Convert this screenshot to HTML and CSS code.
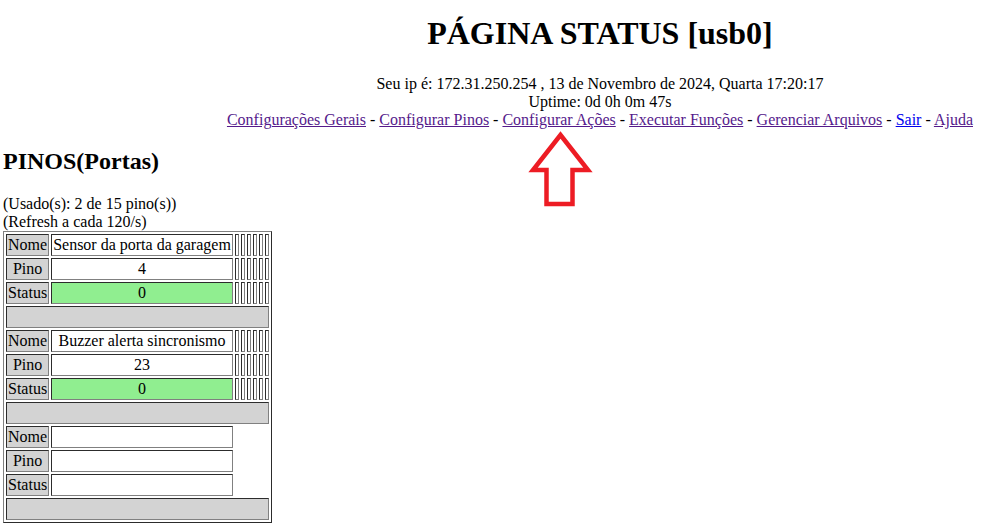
FILE: index.html
```html
<!DOCTYPE html>
<html lang="pt">
<head>
<meta charset="utf-8">
<title>PÁGINA STATUS [usb0]</title>
<link rel="stylesheet" href="styles.css">
</head>
<body>
<div class="header">
  <h1 class="title">PÁGINA STATUS [usb0]</h1>
  <div class="info">Seu ip é: 172.31.250.254 , 13 de Novembro de 2024, Quarta 17:20:17</div>
  <div class="info">Uptime: 0d 0h 0m 47s</div>
  <div class="nav">
    <a class="visited" href="#">Configurações Gerais</a> -
    <a class="visited" href="#">Configurar Pinos</a> -
    <a class="visited" href="#">Configurar Ações</a> -
    <a class="visited" href="#">Executar Funções</a> -
    <a class="visited" href="#">Gerenciar Arquivos</a> -
    <a class="link" href="#">Sair</a> -
    <a class="visited" href="#">Ajuda</a>
  </div>
</div>

<svg class="arrow" width="66" height="80" viewBox="0 0 66 80" aria-hidden="true">
  <polygon points="32.5,5 60,40 44.5,40 44.5,74 18.5,74 18.5,40 5,40" fill="none" stroke="#ed1c24" stroke-width="4.5" stroke-linejoin="miter"/>
</svg>

<h2 class="section">PINOS(Portas)</h2>
<div class="meta">(Usado(s): 2 de 15 pino(s))</div>
<div class="meta">(Refresh a cada 120/s)</div>

<table class="pins">
  <tr><td class="lbl">Nome</td><td class="val">Sensor da porta da garagem</td><td class="n"></td><td class="n"></td><td class="n"></td><td class="n"></td><td class="n"></td><td class="n"></td></tr>
  <tr><td class="lbl">Pino</td><td class="val">4</td><td class="n"></td><td class="n"></td><td class="n"></td><td class="n"></td><td class="n"></td><td class="n"></td></tr>
  <tr><td class="lbl">Status</td><td class="val on">0</td><td class="n"></td><td class="n"></td><td class="n"></td><td class="n"></td><td class="n"></td><td class="n"></td></tr>
  <tr><td class="sep" colspan="8">&nbsp;</td></tr>
  <tr><td class="lbl">Nome</td><td class="val">Buzzer alerta sincronismo</td><td class="n"></td><td class="n"></td><td class="n"></td><td class="n"></td><td class="n"></td><td class="n"></td></tr>
  <tr><td class="lbl">Pino</td><td class="val">23</td><td class="n"></td><td class="n"></td><td class="n"></td><td class="n"></td><td class="n"></td><td class="n"></td></tr>
  <tr><td class="lbl">Status</td><td class="val on">0</td><td class="n"></td><td class="n"></td><td class="n"></td><td class="n"></td><td class="n"></td><td class="n"></td></tr>
  <tr><td class="sep" colspan="8">&nbsp;</td></tr>
  <tr><td class="lbl">Nome</td><td class="val"></td></tr>
  <tr><td class="lbl">Pino</td><td class="val"></td></tr>
  <tr><td class="lbl">Status</td><td class="val"></td></tr>
  <tr><td class="sep" colspan="8">&nbsp;</td></tr>
</table>
</body>
</html>
```

FILE: styles.css
```css
html, body {
  background: #ffffff;
}

body {
  margin: 0;
  padding: 0 3px 3px 3px;
  font-family: "Liberation Serif", "Times New Roman", serif;
  font-size: 16px;
  color: #000000;
  position: relative;
}

.header {
  width: fit-content;
  margin-left: auto;
  margin-right: 17px;
  text-align: center;
  padding-top: 15px;
}

.title {
  font-size: 32px;
  font-weight: bold;
  margin: 0 0 23.4px 0;
}

.info {
  line-height: normal;
}

.nav a {
  text-decoration: underline;
}

.nav a.visited {
  color: #551a8b;
}

.nav a.link {
  color: #0000ee;
}

.arrow {
  position: absolute;
  left: 528px;
  top: 130px;
}

.section {
  font-size: 24px;
  font-weight: bold;
  margin: 19px 0 20px 0;
}

.pins {
  border: 1px outset gray;
  border-spacing: 2px;
  border-collapse: separate;
}

.pins td {
  border: 1px inset gray;
  padding: 1px;
  text-align: center;
  height: 18px;
}

.pins td.lbl {
  background: #d3d3d3;
}

.pins td.val {
  background: #ffffff;
}

.pins td.val.on {
  background: #90ee90;
}

.pins td.n {
  width: 0;
  padding: 1px;
}

.pins td.sep {
  background: #d3d3d3;
}
```
